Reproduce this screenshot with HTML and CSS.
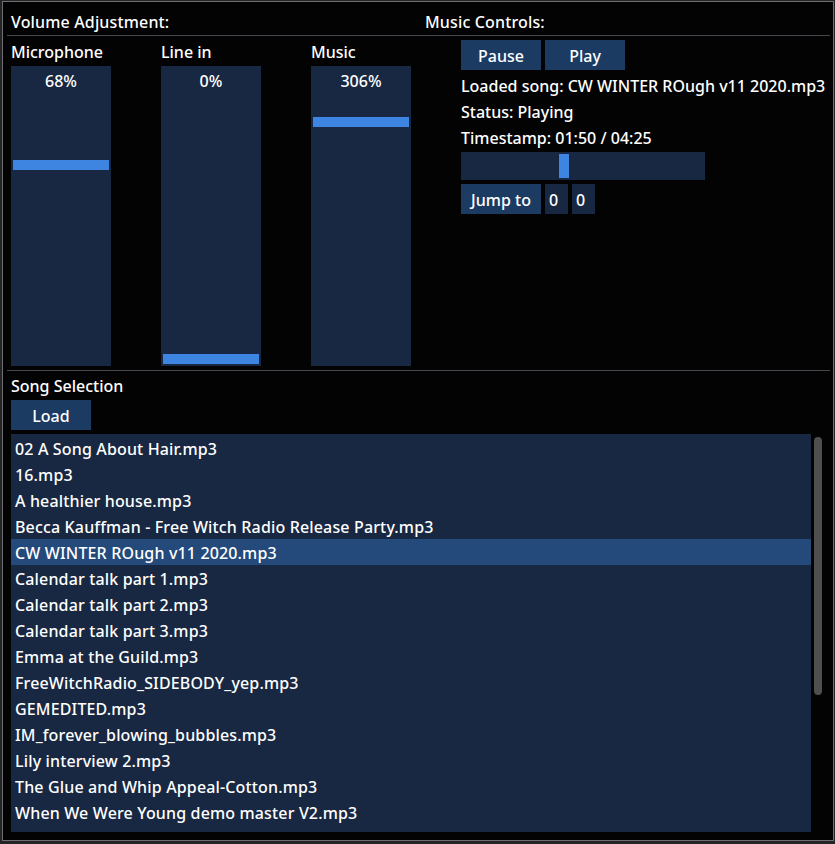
FILE: index.html
```html
<!DOCTYPE html>
<html>
<head>
<meta charset="utf-8">
<link rel="stylesheet" href="styles.css">
</head>
<body>
<div class="window">
  <div class="head-row">
    <div class="head-left">Volume Adjustment:</div>
    <div class="head-right">Music Controls:</div>
  </div>
  <div class="sep"></div>
  <div class="top-body">
    <div class="volumes">
      <div class="vol">
        <div class="label">Microphone</div>
        <div class="vslider"><span class="val">68%</span><div class="vgrab" style="top:94px"></div></div>
      </div>
      <div class="vol">
        <div class="label">Line in</div>
        <div class="vslider"><span class="val">0%</span><div class="vgrab" style="top:288px"></div></div>
      </div>
      <div class="vol last">
        <div class="label">Music</div>
        <div class="vslider"><span class="val">306%</span><div class="vgrab" style="top:51px"></div></div>
      </div>
    </div>
    <div class="controls">
      <div class="btn-row">
        <div class="btn">Pause</div>
        <div class="btn">Play</div>
      </div>
      <div class="line">Loaded song: CW WINTER ROugh v11 2020.mp3</div>
      <div class="line">Status: Playing</div>
      <div class="line">Timestamp: 01:50 / 04:25</div>
      <div class="hslider"><div class="hgrab" style="left:98px"></div></div>
      <div class="btn-row">
        <div class="btn">Jump to</div>
        <div class="input">0</div>
        <div class="input">0</div>
      </div>
    </div>
  </div>
  <div class="sep sep2"></div>
  <div class="songs">
    <div class="line">Song Selection</div>
    <div class="btn load">Load</div>
    <div class="list-wrap">
      <div class="list">
        <div class="item">02 A Song About Hair.mp3</div>
        <div class="item">16.mp3</div>
        <div class="item">A healthier house.mp3</div>
        <div class="item">Becca Kauffman - Free Witch Radio Release Party.mp3</div>
        <div class="item selected">CW WINTER ROugh v11 2020.mp3</div>
        <div class="item">Calendar talk part 1.mp3</div>
        <div class="item">Calendar talk part 2.mp3</div>
        <div class="item">Calendar talk part 3.mp3</div>
        <div class="item">Emma at the Guild.mp3</div>
        <div class="item">FreeWitchRadio_SIDEBODY_yep.mp3</div>
        <div class="item">GEMEDITED.mp3</div>
        <div class="item">IM_forever_blowing_bubbles.mp3</div>
        <div class="item">Lily interview 2.mp3</div>
        <div class="item">The Glue and Whip Appeal-Cotton.mp3</div>
        <div class="item">When We Were Young demo master V2.mp3</div>
      </div>
      <div class="scrollbar"><div class="thumb"></div></div>
    </div>
  </div>
</div>
</body>
</html>
```

FILE: styles.css
```css
html, body {
  margin: 0;
  padding: 0;
  background: #242424;
  width: 835px;
  height: 844px;
  overflow: hidden;
}
body {
  font-family: "Noto Sans", "Open Sans", sans-serif;
  font-size: 16px;
  font-weight: 500;
  line-height: 22px;
  color: #ffffff;
}
.window {
  box-sizing: border-box;
  margin: 1px 0 0 2px;
  width: 832px;
  height: 840px;
  border: 1px solid #6e6e74;
  background: #030303;
}
.head-row {
  display: flex;
  padding: 9px 0 0 8px;
  height: 22px;
  letter-spacing: 0.15px;
}
.head-left {
  width: 414px;
}
.sep {
  height: 1px;
  margin: 2px 3px 0 4px;
  background: #46464f;
}
.top-body {
  display: flex;
}
.volumes {
  display: flex;
  padding: 5px 0 0 8px;
}
.vol {
  width: 150px;
}
.vol.last {
  width: 100px;
}
.label {
  height: 22px;
}
.vslider {
  position: relative;
  margin-top: 3px;
  width: 100px;
  height: 300px;
  background: #192842;
  text-align: center;
}
.val {
  display: block;
  padding-top: 4px;
}
.vgrab {
  position: absolute;
  left: 2px;
  right: 2px;
  height: 10px;
  background: #3d85e0;
}
.controls {
  margin-left: 50px;
  padding-top: 4px;
  display: flex;
  flex-direction: column;
  gap: 4px;
}
.btn-row {
  display: flex;
  gap: 4px;
}
.btn {
  box-sizing: border-box;
  width: 80px;
  height: 30px;
  padding-top: 1px;
  line-height: 30px;
  text-align: center;
  background: #1b3b63;
}
.line {
  height: 22px;
  line-height: 24px;
}
.hslider {
  position: relative;
  width: 244px;
  height: 28px;
  background: #192842;
}
.hgrab {
  position: absolute;
  top: 2px;
  width: 10px;
  height: 24px;
  background: #3d85e0;
}
.input {
  box-sizing: border-box;
  width: 23px;
  height: 30px;
  padding-top: 1px;
  line-height: 30px;
  text-indent: 4px;
  background: #192842;
}
.sep2 {
  margin-top: 4px;
}
.songs {
  padding: 3px 0 0 8px;
}
.load {
  margin-top: 4px;
}
.list-wrap {
  display: flex;
  margin-top: 4px;
  gap: 3px;
}
.list {
  width: 800px;
  height: 398px;
  box-sizing: border-box;
  padding-top: 1px;
  background: #192842;
}
.item {
  height: 26px;
  line-height: 28px;
  padding-left: 4px;
  white-space: nowrap;
  overflow: hidden;
  letter-spacing: 0.15px;
}
.item.selected {
  background: #244a7b;
}
.scrollbar {
  width: 8px;
  padding-top: 3px;
}
.thumb {
  height: 258px;
  border-radius: 4px;
  background: #4f4f4f;
}
```
